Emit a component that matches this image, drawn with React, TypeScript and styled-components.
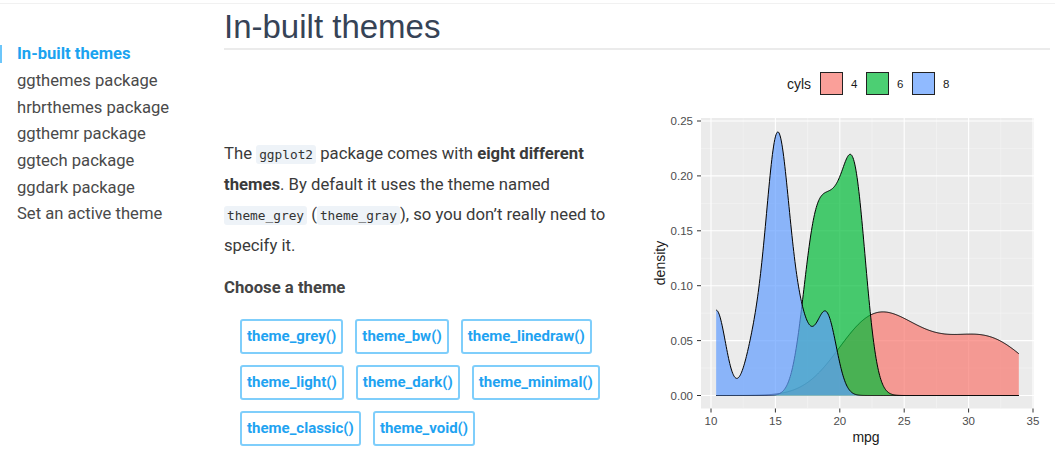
import React, { useMemo } from "react";
import styled, { createGlobalStyle } from "styled-components";

const GlobalStyle = createGlobalStyle`
  html, body { margin: 0; padding: 0; background: #ffffff; }
  body { font-family: Roboto, "Noto Sans", sans-serif; color: #333; }
  * { box-sizing: border-box; }
`;

const Page = styled.div`
  width: 1055px;
  height: 455px;
  overflow: hidden;
  border-top: 3px solid #ffffff;
  position: relative;
`;

const TopRule = styled.div`
  height: 1px;
  background: #f1f1f1;
`;

const Layout = styled.div`
  display: flex;
  align-items: flex-start;
`;

const Sidebar = styled.nav`
  width: 224px;
  flex: none;
  padding-top: 37px;
`;

const NavList = styled.ul`
  list-style: none;
  margin: 0;
  padding: 0;
`;

const NavItem = styled.li`
  padding-left: 17px;
  height: 26.67px;
  display: flex;
  align-items: center;
`;

const NavLink = styled.a<{ $active?: boolean }>`
  display: inline-block;
  font-size: 16.6px;
  line-height: 18px;
  text-decoration: none;
  color: ${(p) => (p.$active ? "#1aa3f0" : "#4a4a4a")};
  font-weight: ${(p) => (p.$active ? 700 : 400)};
  ${(p) =>
    p.$active
      ? `margin-left: -17px; padding-left: 15px; border-left: 2px solid #6cc6fa;`
      : ""}
`;

const Main = styled.main`
  flex: 1;
  padding-top: 3px;
  padding-right: 13px;
`;

const Title = styled.h1`
  margin: 0;
  font-family: "Liberation Sans", Arial, sans-serif;
  font-weight: 400;
  font-size: 33px;
  line-height: 40px;
  color: #364356;
  padding-bottom: 1px;
  border-bottom: 2px solid #ebebeb;
`;

const Row = styled.div`
  display: flex;
  gap: 16px;
  margin-top: 10px;
`;

const TextCol = styled.div`
  width: 400px;
  flex: none;
  padding-top: 79px;
`;

const Para = styled.p`
  margin: 0;
  font-size: 16.7px;
  line-height: 30px;
  color: #3a3a3a;
`;

const Code = styled.code`
  font-family: "DejaVu Sans Mono", "Liberation Mono", monospace;
  font-size: 12.8px;
  background: #eef3f8;
  border-radius: 3px;
  padding: 2px 3px;
  color: #333;
`;

const SubHead = styled.h4`
  margin: 12px 0 0;
  font-size: 16.7px;
  line-height: 30px;
  font-weight: 700;
  color: #444;
`;

const ButtonGrid = styled.div`
  display: flex;
  flex-wrap: wrap;
  gap: 11px 12px;
  margin-top: 16px;
  padding-left: 16px;
  width: 400px;
`;

const ThemeButton = styled.button`
  height: 35px;
  padding: 0 5px;
  border: 2px solid #7fcefb;
  border-radius: 3px;
  background: #ffffff;
  color: #1fa3f1;
  font-family: Roboto, sans-serif;
  font-weight: 700;
  font-size: 15px;
  line-height: 31px;
  cursor: pointer;
`;

const ChartSvg = styled.svg`
  flex: none;
  display: block;
`;

const mpg4 = [22.8, 24.4, 22.8, 32.4, 30.4, 33.9, 21.5, 27.3, 26.0, 30.4, 21.4];
const mpg6 = [21.0, 21.0, 21.4, 18.1, 19.2, 17.8, 19.7];
const mpg8 = [18.7, 14.3, 16.4, 17.3, 15.2, 10.4, 10.4, 14.7, 15.5, 15.2, 13.3, 19.2, 15.8, 15.0];

function quantile(sorted: number[], p: number) {
  const h = (sorted.length - 1) * p;
  const lo = Math.floor(h);
  const hi = Math.min(lo + 1, sorted.length - 1);
  return sorted[lo] + (h - lo) * (sorted[hi] - sorted[lo]);
}

function bwNrd0(data: number[]) {
  const n = data.length;
  const mean = data.reduce((a, b) => a + b, 0) / n;
  const sd = Math.sqrt(data.reduce((a, b) => a + (b - mean) ** 2, 0) / (n - 1));
  const s = [...data].sort((a, b) => a - b);
  const iqr = quantile(s, 0.75) - quantile(s, 0.25);
  let lo = Math.min(sd, iqr / 1.34);
  if (!lo) lo = sd || Math.abs(s[0]) || 1;
  return 0.9 * lo * Math.pow(n, -0.2);
}

function kde(data: number[], xs: number[]) {
  const bw = bwNrd0(data);
  const n = data.length;
  const c = 1 / (n * bw * Math.sqrt(2 * Math.PI));
  return xs.map((x) => data.reduce((acc, xi) => acc + Math.exp(-0.5 * ((x - xi) / bw) ** 2), 0) * c);
}

const X = (v: number) => 711 + (v - 10) * 12.88;
const Y = (d: number) => 395.5 - d * 1098;

const groups = [
  { key: "4", data: mpg4, color: "#F8766D" },
  { key: "6", data: mpg6, color: "#00BA38" },
  { key: "8", data: mpg8, color: "#619CFF" },
];

const axisText = { fontFamily: "'Liberation Sans', Arial, sans-serif", fill: "#4D4D4D", fontSize: 11.5 };
const titleText = { fontFamily: "'Liberation Sans', Arial, sans-serif", fill: "#1a1a1a", fontSize: 14 };

function DensityChart() {
  const curves = useMemo(() => {
    const xs: number[] = [];
    const N = 512;
    for (let i = 0; i < N; i++) xs.push(10.4 + ((33.9 - 10.4) * i) / (N - 1));
    return groups.map((g) => {
      const ds = kde(g.data, xs);
      const pts = xs.map((x, i) => `${X(x).toFixed(2)},${Y(ds[i]).toFixed(2)}`);
      const line = "M" + pts.join("L");
      const area = `M${X(xs[0]).toFixed(2)},${Y(0)}L` + pts.join("L") + `L${X(xs[N - 1]).toFixed(2)},${Y(0)}Z`;
      return { ...g, line, area };
    });
  }, []);

  const panel = { x0: 701, x1: 1034, y0: 118, y1: 408.5 };
  const yMajor = [0, 0.05, 0.1, 0.15, 0.2, 0.25];
  const yMinor = [0.025, 0.075, 0.125, 0.175, 0.225];
  const xMajor = [10, 15, 20, 25, 30, 35];
  const xMinor = [12.5, 17.5, 22.5, 27.5, 32.5];

  return (
    <ChartSvg width={410} height={395} viewBox="640 60 410 395">
      <text x={787} y={89} {...titleText}>cyls</text>
      {groups.map((g, i) => {
        const sx = 820 + i * 46;
        return (
          <g key={g.key}>
            <rect x={sx + 0.5} y={72.5} width={22} height={22} fill="#ffffff" />
            <rect x={sx + 0.5} y={72.5} width={22} height={22} fill={g.color} fillOpacity={0.7} stroke="#222" strokeWidth={1} />
            <text x={sx + 31} y={88} {...axisText} fill="#1a1a1a">{g.key}</text>
          </g>
        );
      })}

      <rect x={panel.x0} y={panel.y0} width={panel.x1 - panel.x0} height={panel.y1 - panel.y0} fill="#EBEBEB" />
      {yMinor.map((d) => (
        <line key={"ym" + d} x1={panel.x0} x2={panel.x1} y1={Y(d)} y2={Y(d)} stroke="#F5F5F5" strokeWidth={0.6} />
      ))}
      {xMinor.map((v) => (
        <line key={"xm" + v} x1={X(v)} x2={X(v)} y1={panel.y0} y2={panel.y1} stroke="#F5F5F5" strokeWidth={0.6} />
      ))}
      {yMajor.map((d) => (
        <line key={"yM" + d} x1={panel.x0} x2={panel.x1} y1={Y(d)} y2={Y(d)} stroke="#FFFFFF" strokeWidth={1.1} />
      ))}
      {xMajor.map((v) => (
        <line key={"xM" + v} x1={X(v)} x2={X(v)} y1={panel.y0} y2={panel.y1} stroke="#FFFFFF" strokeWidth={1.1} />
      ))}

      {curves.map((c) => (
        <g key={c.key}>
          <path d={c.area} fill={c.color} fillOpacity={0.7} />
          <path d={c.line} fill="none" stroke="#000" strokeWidth={1} strokeLinejoin="round" />
        </g>
      ))}

      {yMajor.map((d) => (
        <g key={"yt" + d}>
          <line x1={697} x2={701} y1={Y(d)} y2={Y(d)} stroke="#333" strokeWidth={1} />
          <text x={693} y={Y(d) + 4} textAnchor="end" {...axisText}>{d.toFixed(2)}</text>
        </g>
      ))}
      {xMajor.map((v) => (
        <g key={"xt" + v}>
          <line x1={X(v)} x2={X(v)} y1={408.5} y2={412.5} stroke="#333" strokeWidth={1} />
          <text x={X(v)} y={425} textAnchor="middle" {...axisText}>{v}</text>
        </g>
      ))}
      <text x={866} y={442} textAnchor="middle" {...titleText}>mpg</text>
      <text x={0} y={0} textAnchor="middle" transform="translate(665 263) rotate(-90)" {...titleText}>density</text>
    </ChartSvg>
  );
}

const navItems = [
  "In-built themes",
  "ggthemes package",
  "hrbrthemes package",
  "ggthemr package",
  "ggtech package",
  "ggdark package",
  "Set an active theme",
];

const themes = [
  "theme_grey()",
  "theme_bw()",
  "theme_linedraw()",
  "theme_light()",
  "theme_dark()",
  "theme_minimal()",
  "theme_classic()",
  "theme_void()",
];

export default function App() {
  return (
    <>
      <GlobalStyle />
      <Page>
        <TopRule />
        <Layout>
          <Sidebar>
            <NavList>
              {navItems.map((item, i) => (
                <NavItem key={item}>
                  <NavLink href="#" $active={i === 0}>{item}</NavLink>
                </NavItem>
              ))}
            </NavList>
          </Sidebar>
          <Main>
            <Title>In-built themes</Title>
            <Row>
              <TextCol>
                <Para>
                  The <Code>ggplot2</Code> package comes with <strong>eight different themes</strong>. By default it uses the theme named{" "}
                  <Code>theme_grey</Code> (<Code>theme_gray</Code>), so you don’t really need to specify it.
                </Para>
                <SubHead>Choose a theme</SubHead>
                <ButtonGrid>
                  {themes.map((t) => (
                    <ThemeButton key={t}>{t}</ThemeButton>
                  ))}
                </ButtonGrid>
              </TextCol>
              <DensityChart />
            </Row>
          </Main>
        </Layout>
      </Page>
    </>
  );
}
